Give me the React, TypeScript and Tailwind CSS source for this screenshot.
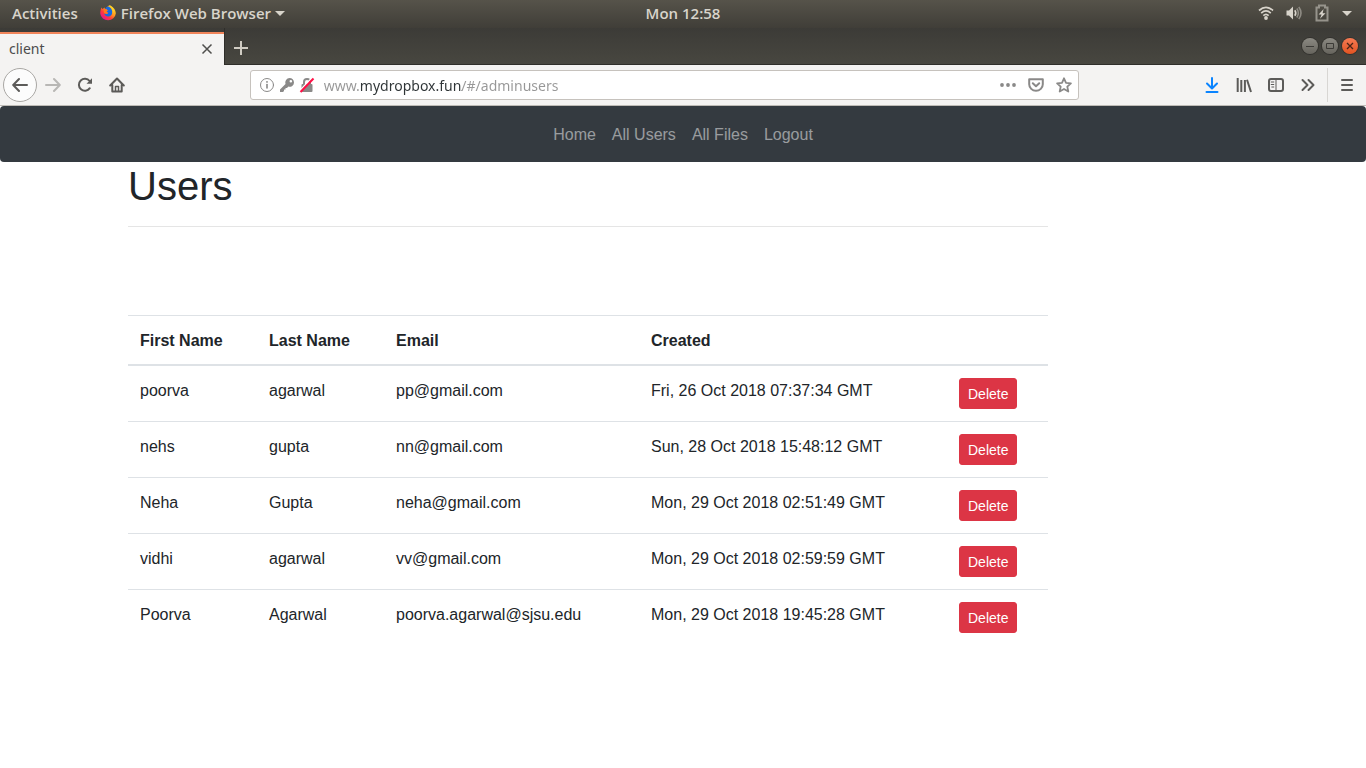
import React from "react";

type User = { first: string; last: string; email: string; created: string };

const users: User[] = [
  { first: "poorva", last: "agarwal", email: "pp@gmail.com", created: "Fri, 26 Oct 2018 07:37:34 GMT" },
  { first: "nehs", last: "gupta", email: "nn@gmail.com", created: "Sun, 28 Oct 2018 15:48:12 GMT" },
  { first: "Neha", last: "Gupta", email: "neha@gmail.com", created: "Mon, 29 Oct 2018 02:51:49 GMT" },
  { first: "vidhi", last: "agarwal", email: "vv@gmail.com", created: "Mon, 29 Oct 2018 02:59:59 GMT" },
  { first: "Poorva", last: "Agarwal", email: "poorva.agarwal@sjsu.edu", created: "Mon, 29 Oct 2018 19:45:28 GMT" },
];

const links = ["Home", "All Users", "All Files", "Logout"];

function Icon({ children, className = "" }: { children: React.ReactNode; className?: string }) {
  return (
    <svg
      viewBox="0 0 16 16"
      className={`size-4 shrink-0 ${className}`}
      fill="none"
      stroke="currentColor"
      strokeWidth="2"
      strokeLinecap="round"
      strokeLinejoin="round"
      aria-hidden="true"
    >
      {children}
    </svg>
  );
}

function Firefox() {
  return (
    <svg viewBox="0 0 16 16" className="size-4 shrink-0" aria-hidden="true">
      <defs>
        <linearGradient id="fox" x1="0.9" y1="0.1" x2="0.2" y2="0.9">
          <stop offset="0" stopColor="#ffe226" />
          <stop offset="0.4" stopColor="#ff9a1f" />
          <stop offset="0.7" stopColor="#ff3a3a" />
          <stop offset="1" stopColor="#e5178c" />
        </linearGradient>
      </defs>
      <path d="M1.6 2.6 2.6 4.2 4.3 2.6 5.2 4.2 8 1.2 9.3.3C12 1 15.8 4 15.8 8.6A7.8 7.4 0 0 1 .3 8.8C.1 6.5.8 4 1.6 2.6Z" fill="url(#fox)" />
      <path d="M5 4.2C6.2 1.5 8.5.8 9.6 2.3c1.9 1.2 3 3.2 2.6 5.8-.4 2.2-2 3.5-4 3.4C6 11.4 4.5 10 4.3 8.4l2.6.7 1.4-1-2-.8.6-1.3 1.3-.5Z" fill="#1769e0" />
      <path d="M5 4.2c1-.5 2 .2 2.5 1.1L6.4 6.7l1.9 1-1.5 1.4-2.6-.9C3.5 6.8 4 5 5 4.2Z" fill="#ff7a1a" />
      <path d="M9.3.3c2.7 1.9 4.3 5 3.3 8.2C15 6 13.5 2 9.3.3Z" fill="#ffd52b" />
    </svg>
  );
}

function SystemBar() {
  return (
    <header className="grid h-7 grid-cols-[1fr_auto_1fr] items-center bg-linear-to-b from-[#56534a] to-[#403e38] px-3 pb-0.5 font-['Open_Sans','Noto_Sans',sans-serif] text-[15px] font-semibold text-[#d8d4cb]">
      <div className="flex items-center gap-[22px]">
        <button type="button">Activities</button>
        <button type="button" className="flex items-center gap-1">
          <Firefox />
          <span className="pl-px">Firefox Web Browser</span>
          <svg viewBox="0 0 10 5" className="h-[5px] w-[10px]" fill="currentColor" aria-hidden="true">
            <path d="M0 0h10L5 5z" />
          </svg>
        </button>
      </div>
      <time>Mon 12:58</time>
      <div className="flex items-center justify-end gap-3 pr-0.5">
        <svg viewBox="0 0 16 16" className="size-4" fill="none" stroke="currentColor" strokeWidth="1.7" aria-label="Wi-Fi">
          <path d="M1 5.5Q8-.8 15 5.5M3.2 8.1Q8 3.8 12.8 8.1M5.3 10.6Q8 8.1 10.7 10.6" />
          <circle cx="8" cy="13" r="1.9" fill="currentColor" stroke="none" />
        </svg>
        <svg viewBox="0 0 16 16" className="size-4" fill="none" strokeWidth="1.6" aria-label="Volume">
          <path d="M.5 5.5H3L7 1.5v13L3 10.5H.5Z" fill="currentColor" />
          <path d="M8.8 5.2q2 2.8 0 5.6" stroke="currentColor" />
          <path d="M10.8 3.5q3.2 4.5 0 9M12.8 2q4.4 6 0 12" stroke="#8e8b83" />
        </svg>
        <svg viewBox="0 0 16 18" className="h-[18px] w-4" aria-label="Battery charging">
          <path d="M5 1.5h6v2h2.5v13h-11v-13H5Z" fill="none" stroke="#96938b" strokeWidth="2" />
          <path d="m9.6 5-5 5.5h3L6 14.8l5.5-5.6H8.6Z" fill="currentColor" />
        </svg>
        <svg viewBox="0 0 10 5" className="h-[5px] w-[10px]" fill="currentColor" aria-hidden="true">
          <path d="M0 0h10L5 5z" />
        </svg>
      </div>
    </header>
  );
}

function TabStrip() {
  return (
    <div className="flex h-[37px] items-stretch bg-linear-to-b from-[#3c3b37] to-[#484740]">
      <div className="flex items-end">
        <div className="flex h-[33px] w-56 items-center justify-between border-t-2 border-[#f0845a] bg-[#f4f3f2] pr-[11px] pb-0.5 pl-[9px] text-[14px] text-[#4c4c4c]">
          <span>client</span>
          <button type="button" aria-label="Close tab">
            <svg viewBox="0 0 12 12" className="size-3" stroke="#4f4f4d" strokeWidth="1.5" aria-hidden="true">
              <path d="m1.5 1.5 9 9m0-9-9 9" />
            </svg>
          </button>
        </div>
      </div>
      <div className="flex flex-1 items-center justify-between border-b border-l border-[#2f2e2a] pr-2 pl-2">
        <button type="button" aria-label="New tab" className="pt-1">
          <svg viewBox="0 0 16 16" className="size-4" stroke="#d0ccc3" strokeWidth="2" aria-hidden="true">
            <path d="M8 1v14M1 8h14" />
          </svg>
        </button>
        <div className="flex gap-1">
          <button type="button" aria-label="Minimize" className="size-4 rounded-full bg-linear-to-b from-[#8c8a83] to-[#66645d] ring-1 ring-[#33322e]">
            <svg viewBox="0 0 16 16" stroke="#3c3b37" aria-hidden="true"><path d="M4 8.5h8" /></svg>
          </button>
          <button type="button" aria-label="Maximize" className="size-4 rounded-full bg-linear-to-b from-[#8c8a83] to-[#66645d] ring-1 ring-[#33322e]">
            <svg viewBox="0 0 16 16" fill="none" stroke="#3c3b37" aria-hidden="true"><path d="M4.5 5.5h7v5h-7z" /></svg>
          </button>
          <button type="button" aria-label="Close window" className="size-4 rounded-full bg-linear-to-b from-[#f67a52] to-[#e2531f] ring-1 ring-[#33322e]">
            <svg viewBox="0 0 16 16" stroke="#4a2418" strokeWidth="1.3" aria-hidden="true"><path d="m5 5 6 6m0-6-6 6" /></svg>
          </button>
        </div>
      </div>
    </div>
  );
}

function Toolbar() {
  return (
    <div className="flex h-[41px] items-center border-b border-[#bebbb6] bg-[#f4f3f2] pr-[11px] pl-[3px] text-[#5c5b59]">
      <div className="flex items-center gap-4">
        <button type="button" aria-label="Back" className="-mr-2 flex size-[34px] items-center justify-center rounded-full border border-[#a9a7a4] bg-[#fcfcfc]">
          <Icon><path d="M15 8H1.5M7 2 1.2 8 7 14" /></Icon>
        </button>
        <button type="button" aria-label="Forward" className="text-[#b8b7b5]">
          <Icon><path d="M1 8h13.5M9 2l5.8 6L9 14" /></Icon>
        </button>
        <button type="button" aria-label="Reload">
          <Icon>
            <path d="M12.8 11.2A6 6 0 1 1 12.6 4" />
            <path d="M15 1.2v5.6H9.500Z" fill="currentColor" stroke="none" />
          </Icon>
        </button>
        <button type="button" aria-label="Home">
          <Icon>
            <path d="M1.2 8.5 8 1.5l6.8 7M3.3 8v6.500h9.400V8" />
            <path d="M6.5 14V9.500h3V14" strokeWidth="1.5" />
          </Icon>
        </button>
      </div>
      <div className="flex-[127]" />
      <div className="flex h-[30px] flex-[829] items-center rounded-[3px] border border-[#c6c2bd] bg-white pr-1.5 pl-2 text-[#8a8988]">
        <div className="flex items-center gap-1">
          <Icon className="stroke-1">
            <circle cx="8" cy="8" r="6.5" />
            <path d="M8 7.5V11" strokeWidth="1.6" />
            <path d="M8 4.8v.1" strokeWidth="1.8" />
          </Icon>
          <svg viewBox="0 0 16 16" className="size-4" fill="#8a8988" aria-hidden="true">
            <path fillRule="evenodd" d="M10.6 1a4.4 4.4 0 0 1 4.4 4.4 4.4 4.4 0 0 1-5.6 4.2L8 11H6.5v1.5H5V14l-1 1H1v-2.500l5.500-5.600A4.400 4.400 0 0 1 10.600 1Zm1.200 1.900a1.300 1.300 0 1 0 .1 2.600 1.300 1.300 0 0 0-.1-2.600Z" />
          </svg>
          <svg viewBox="0 0 16 16" className="size-4" fill="none" aria-hidden="true">
            <path d="M5 8V5a3 3 0 0 1 6 0v3" stroke="#8a8988" strokeWidth="2" />
            <rect x="2.5" y="7" width="11" height="8" rx="1" fill="#8a8988" />
            <path d="M1 13.5 13 .8" stroke="#fff" strokeWidth="1.5" />
            <path d="M1.5 15 14.5 1.5" stroke="#ff1045" strokeWidth="2" />
          </svg>
        </div>
        <input
          type="text"
          aria-label="Address"
          defaultValue="www.mydropbox.fun/#/adminusers"
          className="ml-[9px] min-w-0 flex-1 bg-[linear-gradient(to_right,#979797_0_37px,#2e3436_37px_138px,#979797_138px)] bg-clip-text text-[14px] text-transparent outline-none"
        />
        <div className="flex items-center gap-3">
          <button type="button" aria-label="Page actions">
            <Icon>
              <g fill="currentColor" stroke="none">
                <circle cx="2" cy="8" r="1.9" /><circle cx="8" cy="8" r="1.9" /><circle cx="14" cy="8" r="1.9" />
              </g>
            </Icon>
          </button>
          <button type="button" aria-label="Save to Pocket">
            <Icon><path d="M1.2 2.2h13.6v5a6.8 6.6 0 0 1-13.6 0ZM4.8 6.2 8 9.2l3.2-3" /></Icon>
          </button>
          <button type="button" aria-label="Bookmark this page">
            <Icon><path strokeWidth="1.8" d="m8 1.3 2 4.5 4.9.5-3.6 3.3 1 4.9L8 12l-4.3 2.5 1-4.9L1.1 6.3 6 5.8Z" /></Icon>
          </button>
        </div>
      </div>
      <div className="flex-[127]" />
      <div className="flex items-center gap-4">
        <button type="button" aria-label="Downloads" className="text-[#0a84ff]">
          <Icon><path d="M8 1v9.5M3 6.5l5 5 5-5M2.5 15h11" /></Icon>
        </button>
        <button type="button" aria-label="Library">
          <Icon><path strokeLinecap="butt" d="M1.7 1v14M5.3 3v12M8.9 3v12M11 2.8 15 15" /></Icon>
        </button>
        <button type="button" aria-label="Sidebars">
          <Icon>
            <rect x="1" y="2" width="14" height="12" rx="2" />
            <path d="M8 2v12" strokeWidth="1" />
            <path d="M3.2 5h2.6M3.2 7.5h2.6M3.8 10h2" strokeWidth="1" />
          </Icon>
        </button>
        <button type="button" aria-label="More tools">
          <Icon><path d="m2.5 3 5 5-5 5M8.5 3l5 5-5 5" /></Icon>
        </button>
      </div>
      <div className="ml-[11px] h-[34px] w-px bg-[#d8d6d3]" />
      <button type="button" aria-label="Open menu" className="ml-[11px]">
        <Icon><path d="M3 3h10M3 8h10M3 13h10" /></Icon>
      </button>
    </div>
  );
}

export default function App() {
  return (
    <div className="min-h-screen bg-white">
      <div className="font-['Noto_Sans','Open_Sans',sans-serif]">
        <SystemBar />
        <TabStrip />
        <Toolbar />
      </div>
      <div className="font-['Liberation_Sans',Arial,sans-serif] text-base text-[#212529]">
        <nav className="flex justify-center gap-4 rounded-sm bg-[#343a40] px-4 pt-[17px] pb-[15px]">
          {links.map((label) => (
            <a key={label} href="#" className="text-white/50">{label}</a>
          ))}
        </nav>
        <main className="mx-auto max-w-[1140px] px-[15px]">
          <div className="max-w-[920px]">
            <h1 className="text-[40px] leading-[48px]">Users</h1>
            <hr className="mt-4 border-black/10" />
            <table className="mt-[88px] w-full table-fixed text-left">
              <colgroup>
                <col className="w-[129px]" />
                <col className="w-[127px]" />
                <col className="w-[255px]" />
                <col />
                <col className="w-[101px]" />
              </colgroup>
              <thead>
                <tr className="border-t border-b-2 border-[#dee2e6]">
                  <th className="px-3 pt-[13px] pb-[11px]">First Name</th>
                  <th className="px-3 pt-[13px] pb-[11px]">Last Name</th>
                  <th className="px-3 pt-[13px] pb-[11px]">Email</th>
                  <th className="px-3 pt-[13px] pb-[11px]">Created</th>
                  <th className="px-3 pt-[13px] pb-[11px]" />
                </tr>
              </thead>
              <tbody>
                {users.map((u) => (
                  <tr key={u.email} className="border-t border-[#dee2e6] align-top">
                    <td className="px-3 pt-[13px] pb-[11px]">{u.first}</td>
                    <td className="px-3 pt-[13px] pb-[11px]">{u.last}</td>
                    <td className="px-3 pt-[13px] pb-[11px]">{u.email}</td>
                    <td className="px-3 pt-[13px] pb-[11px]">{u.created}</td>
                    <td className="p-3">
                      <button type="button" className="block rounded-[3px] border border-[#dc3545] bg-[#dc3545] px-2 pt-[5px] pb-[3px] text-[14px] leading-[21px] text-white">
                        Delete
                      </button>
                    </td>
                  </tr>
                ))}
              </tbody>
            </table>
          </div>
        </main>
      </div>
    </div>
  );
}
